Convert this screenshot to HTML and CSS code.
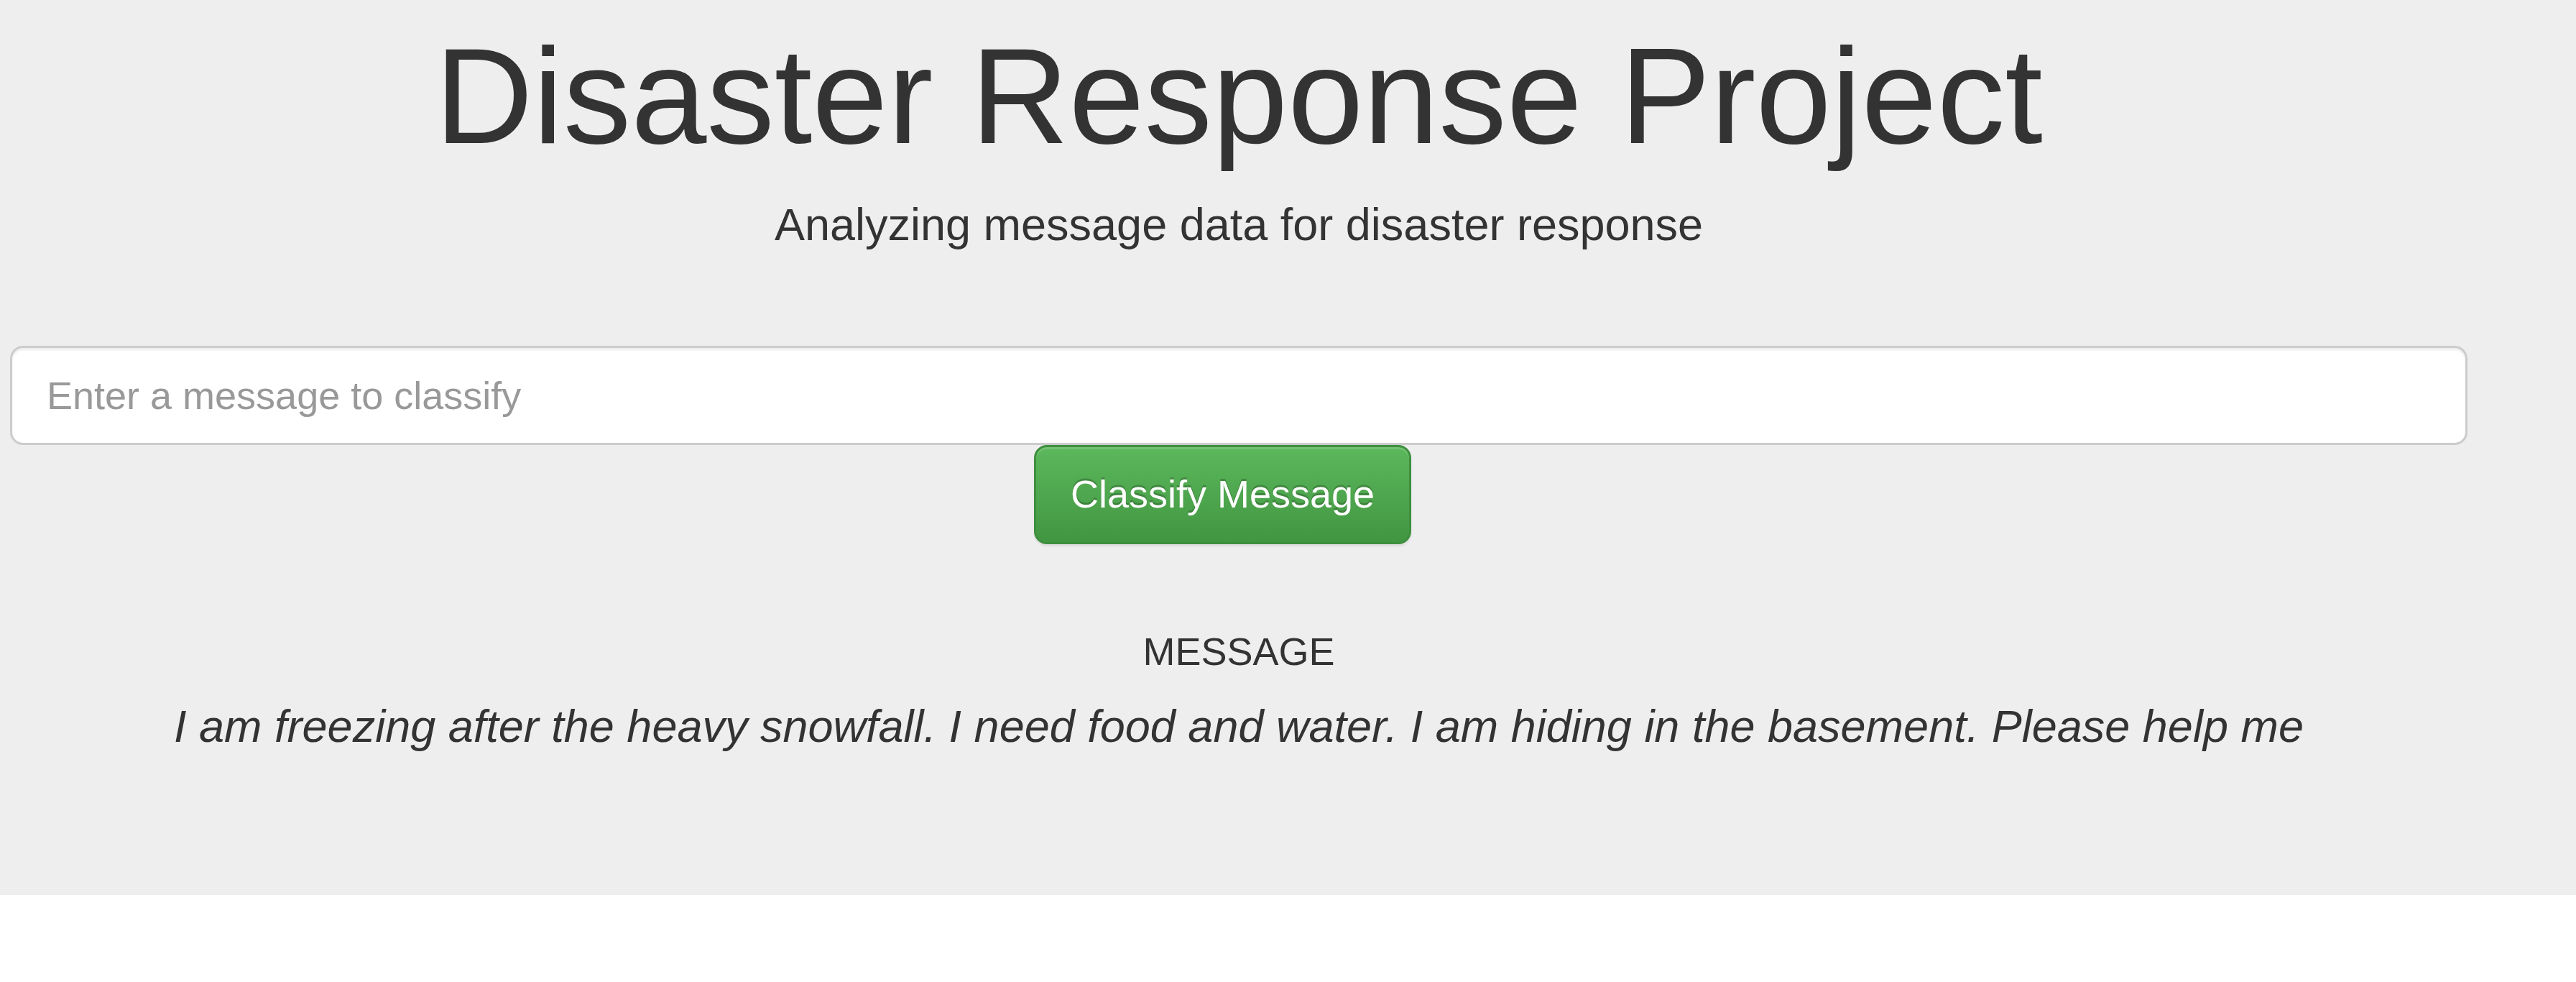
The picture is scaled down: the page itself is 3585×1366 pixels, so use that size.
FILE: index.html
```html
<!DOCTYPE html>
<html lang="en">
<head>
<meta charset="utf-8">
<title>Disaster Response Project</title>
<link rel="stylesheet" href="styles.css">
</head>
<body>
  <div class="jumbotron">
    <div class="container">
      <h1 class="title">Disaster Response Project</h1>
      <p class="lead">Analyzing message data for disaster response</p>
      <hr class="rule">
      <form class="query-form" action="#" method="get">
        <input type="text" class="query-input" name="query" placeholder="Enter a message to classify">
        <div class="button-wrap">
          <button type="submit" class="btn-success">Classify Message</button>
        </div>
      </form>
      <h4 class="message-heading">MESSAGE</h4>
      <p class="lead message-text"><i>I am freezing after the heavy snowfall. I need food and water. I am hiding in the basement. Please help me</i></p>
    </div>
  </div>
</body>
</html>
```

FILE: styles.css
```css
* {
  box-sizing: border-box;
}

html, body {
  margin: 0;
  padding: 0;
  background: #ffffff;
}

body {
  font-family: "Liberation Sans", Arial, Helvetica, sans-serif;
  font-size: 42px;
  line-height: 1.42857;
  color: #333333;
}

.jumbotron {
  background-color: #eeeeee;
  padding: 30px 0 144px 0;
}

.container {
  width: 3420px;
  margin-left: 14px;
}

.title {
  margin: 0 0 30px 0;
  font-size: 189px;
  font-weight: 500;
  line-height: 1.1;
  text-align: center;
}

.lead {
  margin: 0 0 45px 0;
  font-size: 63px;
  font-weight: 200;
  line-height: 1.42857;
  text-align: center;
}

.rule {
  margin: 60px 0;
  border: 0;
  border-top: 3px solid #eeeeee;
  height: 0;
}

.query-form {
  margin: 0;
}

.query-input {
  display: block;
  width: 100%;
  height: 138px;
  padding: 30px 48px;
  font-family: "Liberation Sans", Arial, Helvetica, sans-serif;
  font-size: 54px;
  line-height: 1.3333;
  color: #555555;
  background-color: #ffffff;
  border: 3px solid #cccccc;
  border-radius: 18px;
  box-shadow: inset 0 3px 3px rgba(0, 0, 0, 0.075);
  outline: none;
}

.query-input::placeholder {
  color: #999999;
  opacity: 1;
}

.button-wrap {
  margin-left: 41.66666667%;
}

.btn-success {
  display: inline-block;
  height: 138px;
  padding: 30px 48px;
  font-family: "Liberation Sans", Arial, Helvetica, sans-serif;
  font-size: 54px;
  line-height: 1.3333;
  color: #ffffff;
  text-shadow: 0 -3px 0 rgba(0, 0, 0, 0.2);
  background-color: #5cb85c;
  background-image: linear-gradient(to bottom, #5cb85c 0%, #419641 100%);
  border: 3px solid #3e8f3e;
  border-radius: 18px;
  box-shadow: inset 0 3px 0 rgba(255, 255, 255, 0.15), 0 3px 3px rgba(0, 0, 0, 0.075);
  cursor: pointer;
  vertical-align: top;
}

.message-heading {
  margin: 120px 0 30px 0;
  font-size: 54px;
  font-weight: 500;
  line-height: 1.1;
  text-align: center;
}

.message-text {
  margin-bottom: 45px;
}
```
